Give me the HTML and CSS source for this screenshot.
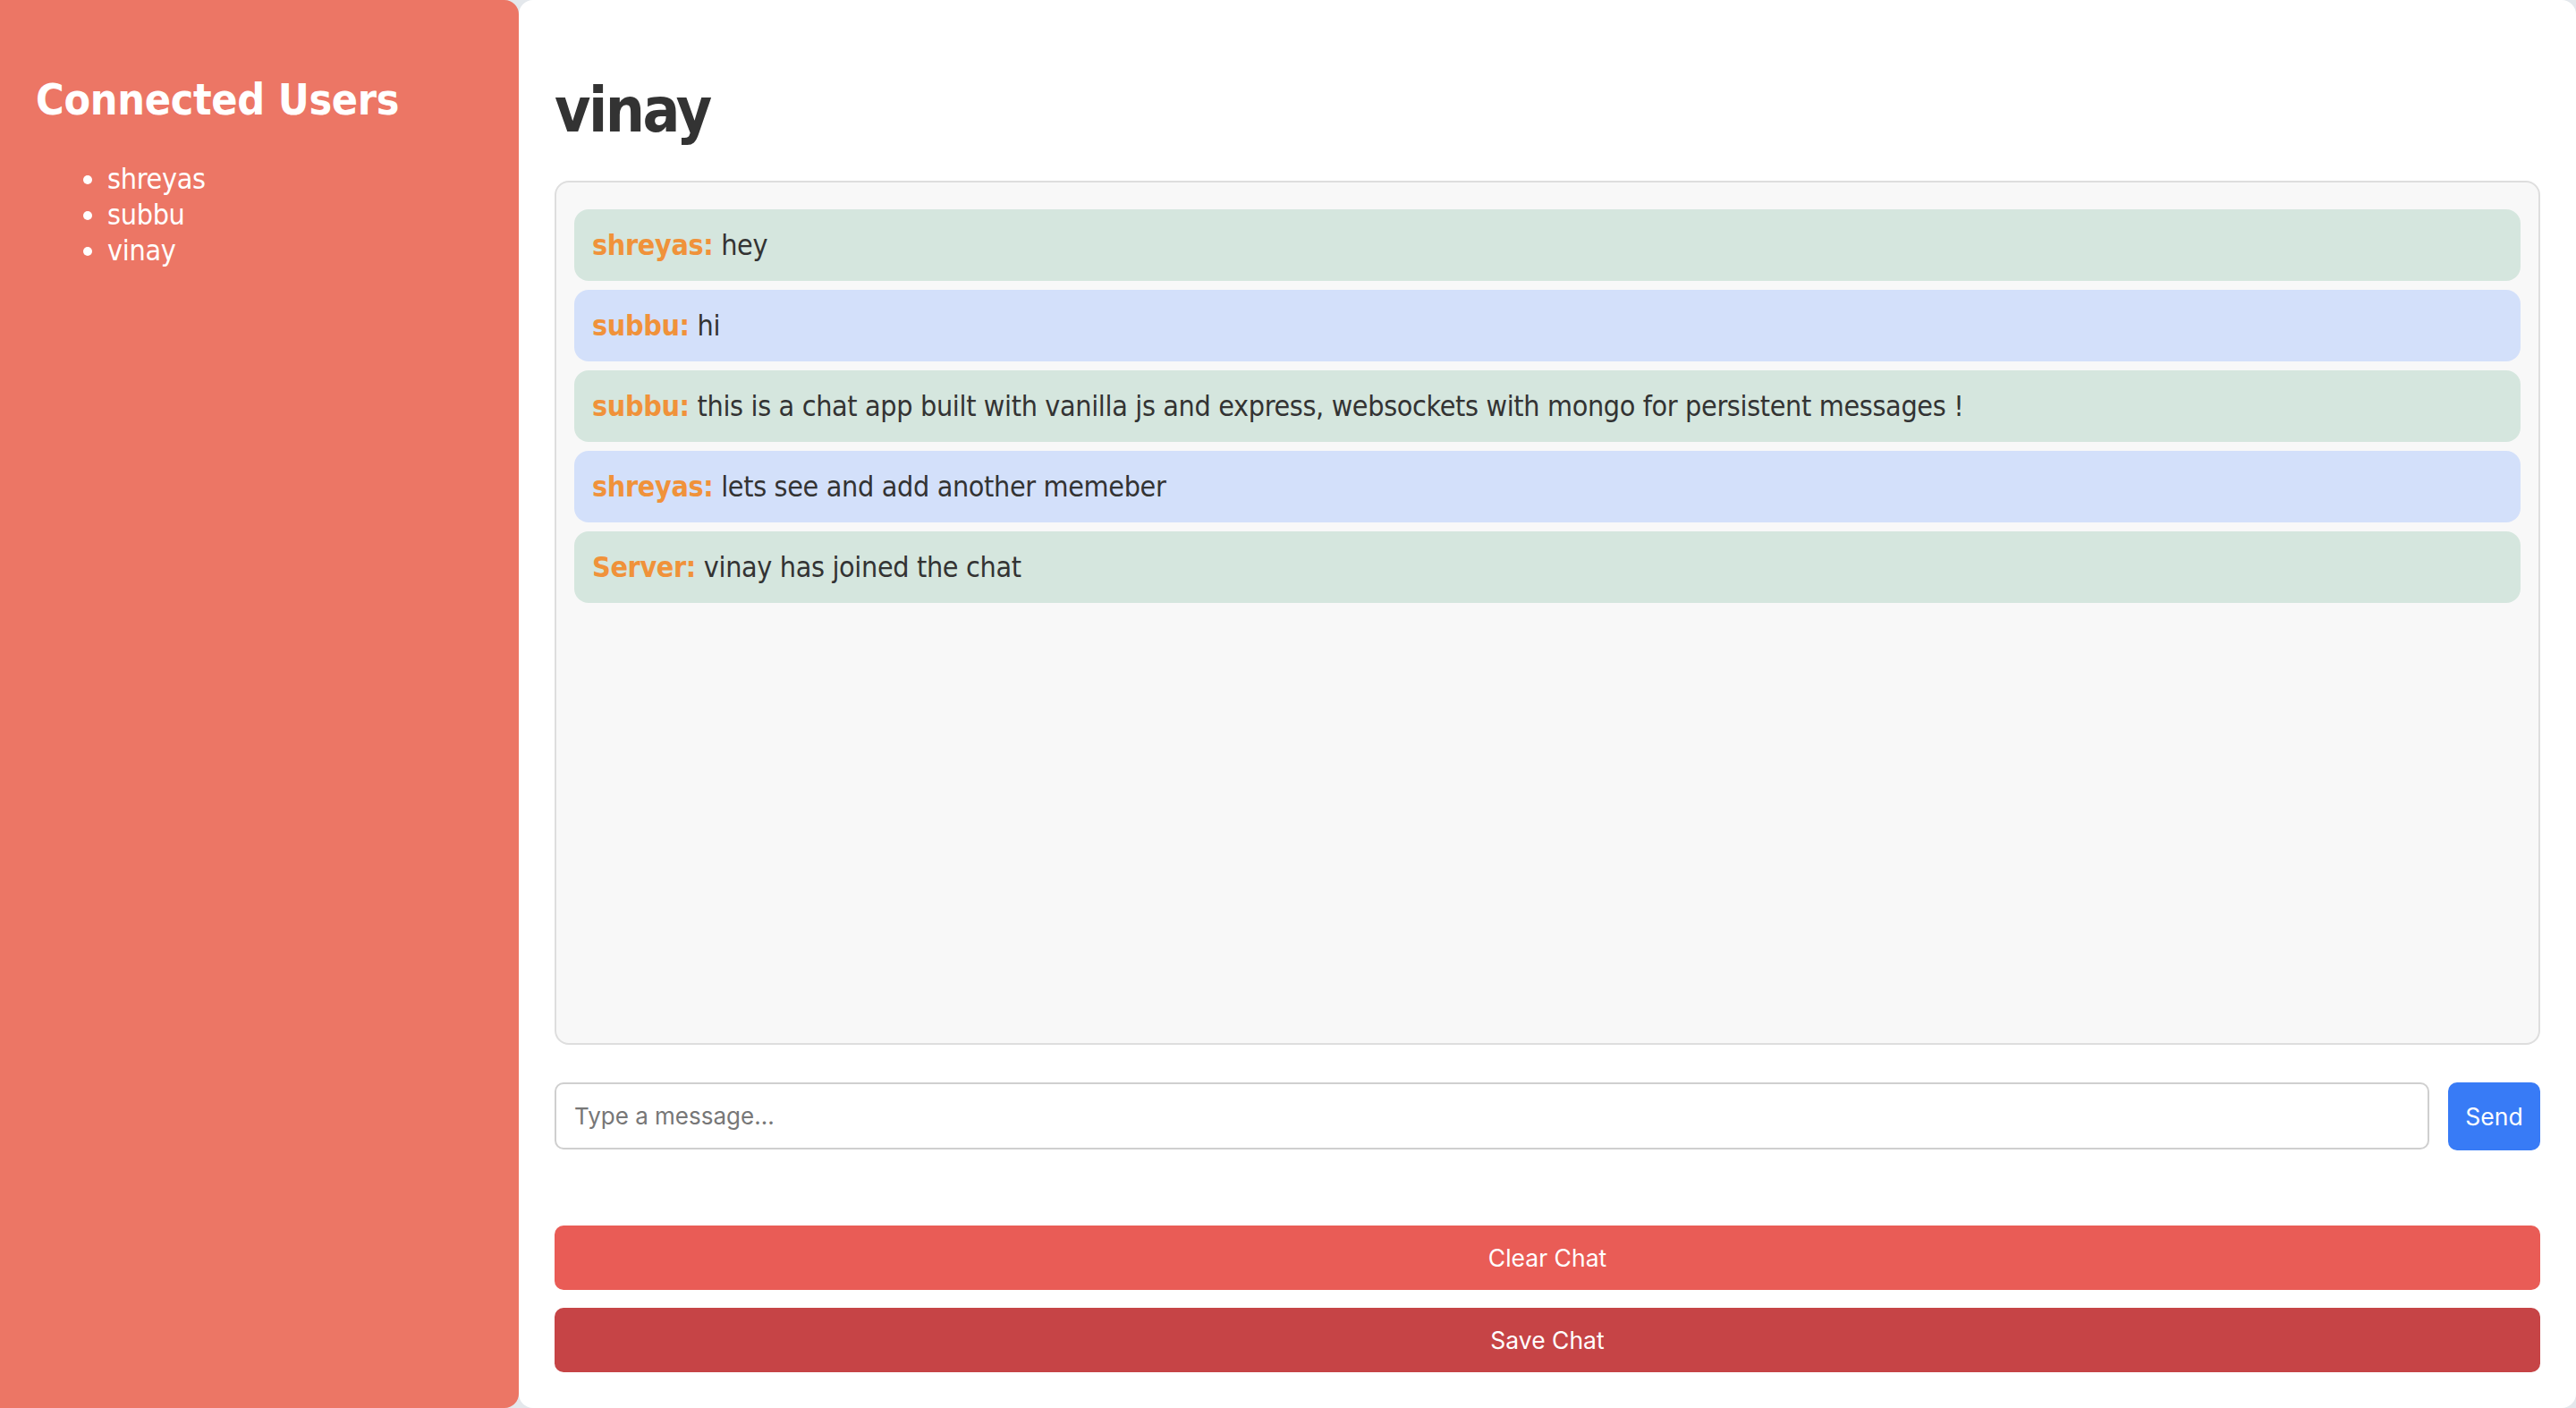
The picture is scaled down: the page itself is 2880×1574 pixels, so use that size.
FILE: index.html
```html
<!DOCTYPE html>
<html lang="en">
<head>
<meta charset="utf-8">
<title>Chat</title>
<link rel="stylesheet" href="styles.css">
</head>
<body>
  <aside class="sidebar">
    <h2 class="sidebar-title">Connected Users</h2>
    <ul class="user-list">
      <li>shreyas</li>
      <li>subbu</li>
      <li>vinay</li>
    </ul>
  </aside>
  <main class="main">
    <h1 class="room-title">vinay</h1>
    <div class="chat-box">
      <div class="msg msg-green"><span class="sender">shreyas:</span> hey</div>
      <div class="msg msg-blue"><span class="sender">subbu:</span> hi</div>
      <div class="msg msg-green"><span class="sender">subbu:</span> this is a chat app built with vanilla js and express, websockets with mongo for persistent messages !</div>
      <div class="msg msg-blue"><span class="sender">shreyas:</span> lets see and add another memeber</div>
      <div class="msg msg-green"><span class="sender">Server:</span> vinay has joined the chat</div>
    </div>
    <div class="input-row">
      <input class="msg-input" type="text" placeholder="Type a message...">
      <button class="btn btn-send">Send</button>
    </div>
    <div class="actions">
      <button class="btn btn-clear">Clear Chat</button>
      <button class="btn btn-save">Save Chat</button>
    </div>
  </main>
</body>
</html>
```

FILE: styles.css
```css
* { box-sizing: border-box; }

html, body { height: 100%; }

body {
  margin: 0;
  display: flex;
  height: 1574px;
  background: #e4e8ec;
  font-family: "DejaVu Sans Condensed", "DejaVu Sans", sans-serif;
  font-stretch: condensed;
  color: #333;
}

.sidebar {
  width: 580px;
  flex: none;
  background: #ec7665;
  color: #fff;
  border-radius: 0 16px 16px 0;
  padding: 40px 40px;
}

.sidebar-title {
  margin: 42px 0 40px;
  font-size: 48px;
  line-height: 58px;
  font-weight: bold;
  letter-spacing: -0.3px;
}

.user-list {
  margin: 0;
  padding-left: 80px;
  font-size: 32px;
  line-height: 40px;
  letter-spacing: -0.3px;
}

.main {
  flex: 1;
  background: #fff;
  border-radius: 16px;
  padding: 40px 40px 40px;
  display: flex;
  flex-direction: column;
  min-width: 0;
}

.room-title {
  margin: 43px 0 39px;
  font-size: 69px;
  line-height: 80px;
  font-weight: bold;
  letter-spacing: -2.5px;
  color: #333;
}

.chat-box {
  flex: 1;
  background: #f8f8f8;
  border: 2px solid #dedede;
  border-radius: 16px;
  padding: 20px;
  overflow: hidden;
}

.msg {
  margin: 10px 0;
  padding: 20px;
  border-radius: 16px;
  font-size: 32px;
  line-height: 40px;
  letter-spacing: -0.35px;
  color: #333;
}

.msg-green { background: #d5e6de; }
.msg-blue { background: #d3e0fa; }

.sender {
  color: #f0923a;
  font-weight: bold;
}

.input-row {
  display: flex;
  gap: 21px;
  margin-top: 42px;
}

.msg-input {
  flex: 1;
  height: 75px;
  border: 2px solid #cfcfcf;
  border-radius: 10px;
  padding: 0 20px;
  font-family: Inter, "Liberation Sans", sans-serif;
  font-size: 26px;
  color: #333;
  background: #fff;
  outline: none;
}

.msg-input::placeholder { color: #777; }

.btn {
  border: none;
  border-radius: 10px;
  color: #fff;
  font-family: Inter, "Liberation Sans", sans-serif;
  font-size: 26.5px;
  cursor: pointer;
}

.btn-send {
  height: 76px;
  width: 103px;
  padding: 0;
  background: #387bf6;
}

.actions {
  display: flex;
  flex-direction: column;
  gap: 20px;
  margin-top: 84px;
}

.btn-clear,
.btn-save {
  height: 72px;
  width: 100%;
}

.btn-clear { background: #e95c56; }
.btn-save { background: #c64446; }
```
